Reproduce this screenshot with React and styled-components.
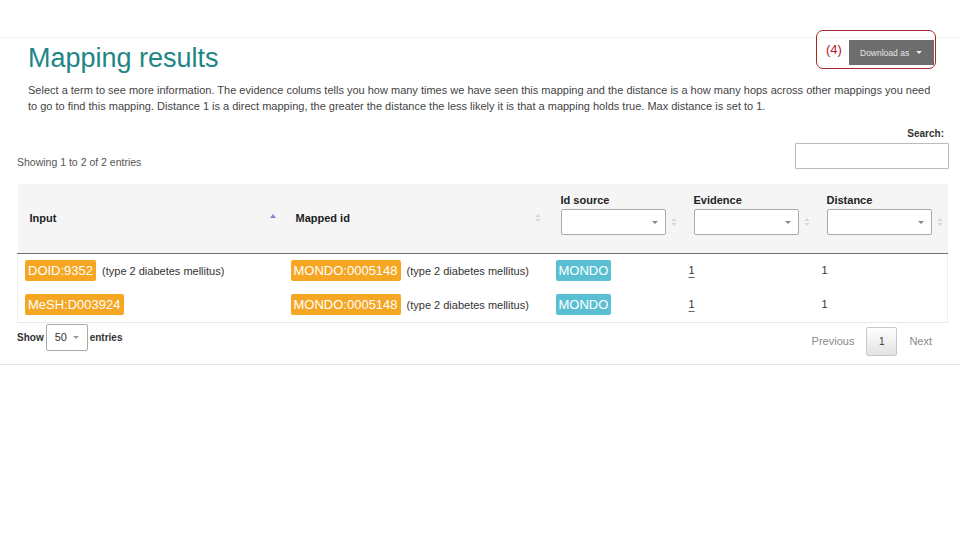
import styled, { createGlobalStyle } from "styled-components";

const GlobalStyle = createGlobalStyle`
  body {
    margin: 0;
    background: #fff;
    font-family: "Liberation Sans", Arial, sans-serif;
    color: #333;
  }
`;

const Page = styled.div`
  margin-top: 37px;
  border-top: 1px solid #eef6f5;
  border-bottom: 1px solid #e3e3e3;
  padding: 0 11px 8px 17px;
`;

const TitleRow = styled.div`
  display: flex;
  justify-content: space-between;
  align-items: flex-start;
  padding: 2px 15px 0 11px;
`;

const Title = styled.h1`
  margin: 3px 0 0;
  font-size: 27px;
  line-height: 30px;
  font-weight: normal;
  color: #1f8686;
`;

const DownloadWrap = styled.div`
  position: relative;
`;

const DownloadButton = styled.button`
  display: flex;
  align-items: center;
  justify-content: space-between;
  width: 85px;
  height: 25px;
  padding: 0 12px 0 11px;
  border: none;
  background: #6d6d6d;
  color: #e6e6e6;
  font-family: inherit;
  font-size: 8.5px;
`;

const Caret = styled.span`
  width: 0;
  height: 0;
  border-left: 3px solid transparent;
  border-right: 3px solid transparent;
  border-top: 3px solid ${(p) => p.$color || "#eee"};
`;

const Annotation = styled.div`
  position: absolute;
  left: -33px;
  top: -10px;
  width: 120px;
  height: 39px;
  box-sizing: border-box;
  border: 1px solid #a3282c;
  border-radius: 7px;
  display: flex;
  align-items: center;
  padding-left: 9px;
  color: #b0201f;
  font-size: 13px;
  pointer-events: none;
`;

const Intro = styled.p`
  margin: 9px 0 0;
  padding-left: 11px;
  font-size: 11px;
  line-height: 16px;
  color: #444;
`;

const Controls = styled.div`
  display: flex;
  justify-content: space-between;
  align-items: flex-end;
  margin-top: 13px;
`;

const Showing = styled.div`
  font-size: 10.5px;
  line-height: 14px;
  color: #555;
`;

const SearchBox = styled.label`
  display: flex;
  flex-direction: column;
  align-items: flex-end;
  font-size: 10px;
  line-height: 14px;
  font-weight: bold;
  color: #333;
  padding-right: 5px;
`;

const SearchInput = styled.input`
  width: 154px;
  height: 26px;
  box-sizing: border-box;
  margin: 2px -5px 0 0;
  border: 1px solid #bbb;
  border-radius: 1px;
`;

const Table = styled.table`
  margin-top: 15px;
  width: 930px;
  border-collapse: collapse;
  table-layout: fixed;
`;

const HeadCell = styled.th`
  width: ${(p) => p.$w}px;
  height: 69px;
  box-sizing: border-box;
  padding: ${(p) => (p.$filter ? "9px 5px 0 12px" : "0 8px 0 12px")};
  vertical-align: ${(p) => (p.$filter ? "top" : "middle")};
  background: #f5f5f5;
  border-bottom: 1px solid #6f6f6f;
  text-align: left;
  font-size: 11px;
  line-height: 14px;
  color: #222;
`;

const HeadRow = styled.div`
  display: flex;
  align-items: center;
  justify-content: space-between;
  gap: 5px;
  margin-top: ${(p) => (p.$filter ? "2px" : "0")};
`;

const FilterSelect = styled.div`
  flex: 1;
  height: 26px;
  box-sizing: border-box;
  border: 1px solid #aaa;
  border-radius: 2px;
  background: #fff;
  display: flex;
  align-items: center;
  justify-content: flex-end;
  padding-right: 7px;
`;

const Cell = styled.td`
  padding: 6px 7px 6px 7px;
  font-size: 11px;
  line-height: 21px;
  color: #333;
  vertical-align: top;
  border-left: ${(p) => (p.$first ? "1px solid #eee" : "none")};
  border-right: ${(p) => (p.$last ? "1px solid #eee" : "none")};
  border-bottom: ${(p) => (p.$bottom ? "1px solid #e8e8e8" : "none")};
`;

const Badge = styled.span`
  display: inline-block;
  padding: 0 3px;
  margin-right: ${(p) => (p.$gap ? "6px" : "0")};
  border-radius: 2px;
  background: ${(p) => (p.$tone === "info" ? "#5bbfd3" : "#f5a623")};
  color: #fff;
  font-size: 13px;
  line-height: 21px;
`;

const EvidenceLink = styled.a`
  color: #333;
  text-decoration: underline;
  text-underline-offset: 3px;
  text-decoration-color: #666;
`;

const Footer = styled.div`
  display: flex;
  justify-content: space-between;
  align-items: flex-start;
  padding-right: 17px;
`;

const Length = styled.div`
  display: flex;
  align-items: center;
  margin-top: 1px;
  font-size: 10px;
  font-weight: bold;
  color: #333;
`;

const LengthSelect = styled.div`
  width: 42px;
  height: 27px;
  box-sizing: border-box;
  margin: 0 2px 0 2px;
  border: 1px solid #aaa;
  border-radius: 2px;
  display: flex;
  align-items: center;
  justify-content: space-between;
  padding: 0 8px 0 8px;
  font-size: 11px;
  font-weight: normal;
  color: #333;
`;

const Pager = styled.div`
  display: flex;
  align-items: center;
  margin-top: 4px;
  font-size: 11px;
  color: #8a8a8a;
`;

const PageButton = styled.div`
  width: 31px;
  height: 29px;
  box-sizing: border-box;
  margin: 0 12px;
  border: 1px solid #c8c8c8;
  border-radius: 2px;
  background: linear-gradient(#fff, #e2e2e2);
  display: flex;
  align-items: center;
  justify-content: center;
  color: #333;
  font-size: 10px;
`;

const SortIcon = ({ mode }) => (
  <svg width="6" height="10" viewBox="0 0 6 10">
    {mode === "asc" ? (
      <path d="M0 5 L3 1 L6 5 Z" fill="#7c87d6" />
    ) : (
      <>
        <path d="M0.5 4 L3 1 L5.5 4 Z" fill="#d6d6d6" />
        <path d="M0.5 6 L3 9 L5.5 6 Z" fill="#d6d6d6" />
      </>
    )}
  </svg>
);

const rows = [
  { input: "DOID:9352", label: "(type 2 diabetes mellitus)" },
  { input: "MeSH:D003924", label: "" },
];

const columns = [
  { key: "input", title: "Input", w: 266, sort: "asc" },
  { key: "mapped", title: "Mapped id", w: 265, sort: "both" },
  { key: "source", title: "Id source", w: 133, filter: true },
  { key: "evidence", title: "Evidence", w: 133, filter: true },
  { key: "distance", title: "Distance", w: 133, filter: true },
];

export default function App() {
  return (
    <>
      <GlobalStyle />
      <Page>
        <TitleRow>
          <Title>Mapping results</Title>
          <DownloadWrap>
            <DownloadButton>
              Download as <Caret />
            </DownloadButton>
            <Annotation>(4)</Annotation>
          </DownloadWrap>
        </TitleRow>
        <Intro>
          Select a term to see more information. The evidence colums tells you
          how many times we have seen this mapping and the distance is a how
          many hops across other mappings you need
          <br />
          to go to find this mapping. Distance 1 is a direct mapping, the
          greater the distance the less likely it is that a mapping holds true.
          Max distance is set to 1.
        </Intro>
        <Controls>
          <Showing>Showing 1 to 2 of 2 entries</Showing>
          <SearchBox>
            Search:
            <SearchInput />
          </SearchBox>
        </Controls>
        <Table>
          <thead>
            <tr>
              {columns.map((c) =>
                c.filter ? (
                  <HeadCell key={c.key} $w={c.w} $filter>
                    {c.title}
                    <HeadRow $filter>
                      <FilterSelect>
                        <Caret $color="#888" />
                      </FilterSelect>
                      <SortIcon mode="both" />
                    </HeadRow>
                  </HeadCell>
                ) : (
                  <HeadCell key={c.key} $w={c.w}>
                    <HeadRow>
                      {c.title}
                      <SortIcon mode={c.sort} />
                    </HeadRow>
                  </HeadCell>
                )
              )}
            </tr>
          </thead>
          <tbody>
            {rows.map((r, i) => {
              const bottom = i === rows.length - 1;
              return (
                <tr key={r.input}>
                  <Cell $first $bottom={bottom}>
                    <Badge $gap>{r.input}</Badge>
                    {r.label}
                  </Cell>
                  <Cell $bottom={bottom}>
                    <Badge $gap>MONDO:0005148</Badge>
                    (type 2 diabetes mellitus)
                  </Cell>
                  <Cell $bottom={bottom}>
                    <Badge $tone="info">MONDO</Badge>
                  </Cell>
                  <Cell $bottom={bottom}>
                    <EvidenceLink>1</EvidenceLink>
                  </Cell>
                  <Cell $last $bottom={bottom}>
                    1
                  </Cell>
                </tr>
              );
            })}
          </tbody>
        </Table>
        <Footer>
          <Length>
            Show
            <LengthSelect>
              50 <Caret $color="#999" />
            </LengthSelect>
            entries
          </Length>
          <Pager>
            Previous
            <PageButton>1</PageButton>
            Next
          </Pager>
        </Footer>
      </Page>
    </>
  );
}
